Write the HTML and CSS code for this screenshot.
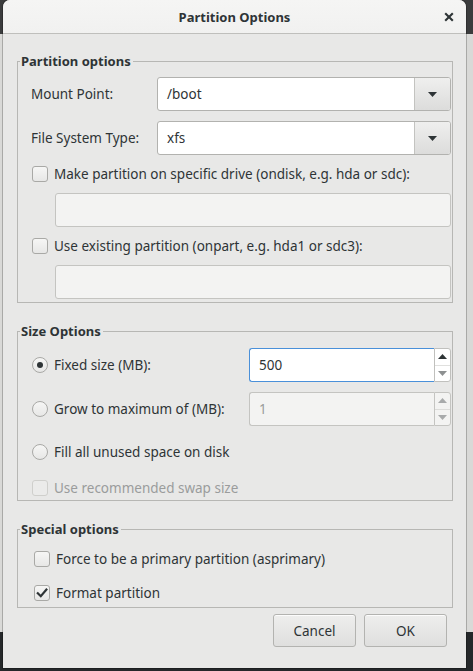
FILE: index.html
```html
<!DOCTYPE html>
<html>
<head>
<meta charset="utf-8">
<title>Partition Options</title>
<link rel="stylesheet" href="styles.css">
</head>
<body>
<div class="desktop">
  <div class="dialog">
    <header class="titlebar">
      <span class="title">Partition Options</span>
      <span class="close">
        <svg width="10" height="10" viewBox="0 0 10 10"><path d="M1.2 1.2 L8.8 8.8 M8.8 1.2 L1.2 8.8" stroke="#2e3436" stroke-width="2.1" stroke-linecap="butt" fill="none"/></svg>
      </span>
    </header>
    <div class="content">
      <fieldset class="frame frame-part">
        <legend>Partition options</legend>
        <div class="field-row">
          <span class="label">Mount Point:</span>
          <div class="combo">
            <span class="combo-text">/boot</span>
            <span class="combo-btn"><svg width="9" height="5" viewBox="0 0 9 5"><polygon points="0,0 9,0 4.5,5" fill="#2e3436"/></svg></span>
          </div>
        </div>
        <div class="field-row">
          <span class="label">File System Type:</span>
          <div class="combo">
            <span class="combo-text">xfs</span>
            <span class="combo-btn"><svg width="9" height="5" viewBox="0 0 9 5"><polygon points="0,0 9,0 4.5,5" fill="#2e3436"/></svg></span>
          </div>
        </div>
        <div class="check-row">
          <span class="check"></span>
          <span>Make partition on specific drive (ondisk, e.g. hda or sdc):</span>
        </div>
        <div class="entry disabled"></div>
        <div class="check-row">
          <span class="check"></span>
          <span>Use existing partition (onpart, e.g. hda1 or sdc3):</span>
        </div>
        <div class="entry disabled"></div>
      </fieldset>

      <fieldset class="frame frame-size">
        <legend>Size Options</legend>
        <div class="size-row">
          <div class="radio-line"><span class="radio on"></span><span>Fixed size (MB):</span></div>
          <div class="spin focused">
            <span class="spin-entry">500</span>
            <span class="spin-btns">
              <span class="spin-half"><svg width="9" height="5" viewBox="0 0 9 5"><polygon points="0,5 9,5 4.5,0" fill="#2e3436"/></svg></span>
              <span class="spin-half"><svg width="9" height="5" viewBox="0 0 9 5"><polygon points="0,0 9,0 4.5,5" fill="#8d9091"/></svg></span>
            </span>
          </div>
        </div>
        <div class="size-row second">
          <div class="radio-line"><span class="radio"></span><span>Grow to maximum of (MB):</span></div>
          <div class="spin disabled">
            <span class="spin-entry">1</span>
            <span class="spin-btns">
              <span class="spin-half"><svg width="9" height="5" viewBox="0 0 9 5"><polygon points="0,5 9,5 4.5,0" fill="#a8aaab"/></svg></span>
              <span class="spin-half"><svg width="9" height="5" viewBox="0 0 9 5"><polygon points="0,0 9,0 4.5,5" fill="#a8aaab"/></svg></span>
            </span>
          </div>
        </div>
        <div class="radio-line fill-row"><span class="radio"></span><span>Fill all unused space on disk</span></div>
        <div class="check-row swap-row muted">
          <span class="check dim"></span>
          <span>Use recommended swap size</span>
        </div>
      </fieldset>

      <fieldset class="frame frame-special">
        <legend>Special options</legend>
        <div class="check-row special">
          <span class="check"></span>
          <span>Force to be a primary partition (asprimary)</span>
        </div>
        <div class="check-row special">
          <span class="check checked"><svg width="12" height="12" viewBox="0 0 12 12"><path d="M1.8 6.2 L4.8 9.2 L10.4 2.6" stroke="#2e3436" stroke-width="2.2" fill="none" stroke-linecap="square"/></svg></span>
          <span>Format partition</span>
        </div>
      </fieldset>

      <div class="actions">
        <button class="btn">Cancel</button>
        <button class="btn">OK</button>
      </div>
    </div>
  </div>
</div>
</body>
</html>
```

FILE: styles.css
```css
* { box-sizing: border-box; }

html, body {
  margin: 0;
  padding: 0;
}

body {
  width: 473px;
  height: 671px;
  overflow: hidden;
  font-family: "Noto Sans", "Open Sans", sans-serif;
  font-size: 13.5px;
  color: #2e3436;
  background: linear-gradient(#3b3c3d 0, #3b3c3d 34px, #d9d9d7 34px, #d9d9d7 632px, #25282a 632px);
}

.desktop {
  padding-left: 3px;
}

.dialog {
  width: 463px;
  height: 668px;
  background: #e8e8e7;
  border-radius: 7px 7px 0 0;
  box-shadow: 0 0 0 1px rgba(0, 0, 0, 0.22);
  display: flex;
  flex-direction: column;
}

.titlebar {
  height: 34px;
  flex: none;
  border-bottom: 1px solid #bfbfbc;
  background: linear-gradient(#f5f5f4, #f1f1f0);
  border-radius: 7px 7px 0 0;
  display: flex;
  align-items: center;
  justify-content: center;
  position: relative;
}

.title {
  font-weight: bold;
  font-size: 13px;
  line-height: 16px;
}

.close {
  position: absolute;
  right: 12px;
  top: 12px;
  width: 10px;
  height: 10px;
  display: flex;
}

.content {
  padding: 19px 13px 0 14px;
  display: flex;
  flex-direction: column;
}

.frame {
  margin: 0;
  border: 1px solid #b7b7b4;
  border-radius: 0;
  padding: 8px 1px 3px 13px;
  display: flex;
  flex-direction: column;
  min-width: 0;
}

.frame legend {
  font-weight: bold;
  font-size: 13px;
  line-height: 16px;
  padding: 0 2px 0 1px;
  margin-left: -11px;
}

.frame-part .field-row + .field-row {
  margin-top: 10px;
}

.field-row {
  display: grid;
  grid-template-columns: 126px 1fr;
  align-items: center;
  height: 34px;
}

.combo {
  display: flex;
  height: 34px;
  border: 1px solid #b2b2af;
  border-radius: 3px;
  background: #ffffff;
  overflow: hidden;
}

.combo-text {
  flex: 1;
  padding-left: 9px;
  line-height: 32px;
}

.combo-btn {
  width: 36px;
  flex: none;
  border-left: 1px solid #c3c3c0;
  background: linear-gradient(#efefee, #dcdcdb);
  display: flex;
  align-items: center;
  justify-content: center;
  padding-top: 1px;
}

.check-row {
  display: flex;
  align-items: center;
  gap: 6px;
  height: 24px;
  padding-left: 1px;
  margin-top: 7px;
}

.frame-part .check-row + .entry {
  margin-top: 7px;
}

.entry {
  height: 34px;
  margin-left: 24px;
  border: 1px solid #c4c4c1;
  border-radius: 3px;
  background: #f3f3f2;
}

.check {
  width: 16px;
  height: 16px;
  flex: none;
  border: 1px solid #a9a9a6;
  border-radius: 3px;
  background: linear-gradient(#f6f6f5, #e7e7e6);
  display: flex;
  align-items: center;
  justify-content: center;
}

.check.dim {
  border-color: #cfcfcc;
  background: #ebebea;
}

.muted {
  color: #9a9c9c;
}

.radio {
  width: 16px;
  height: 16px;
  flex: none;
  border: 1px solid #a9a9a6;
  border-radius: 50%;
  background: linear-gradient(#f6f6f5, #e7e7e6);
  display: flex;
  align-items: center;
  justify-content: center;
}

.radio.on::after {
  content: "";
  width: 6px;
  height: 6px;
  border-radius: 50%;
  background: #2e3436;
}

.frame-size {
  margin-top: 20px;
  padding-top: 9px;
  padding-bottom: 2px;
}

.size-row {
  display: grid;
  grid-template-columns: 218px 1fr;
  align-items: center;
  height: 34px;
}

.size-row.second {
  margin-top: 10px;
}

.radio-line {
  display: flex;
  align-items: center;
  gap: 6px;
  padding-left: 1px;
}

.fill-row {
  height: 24px;
  margin-top: 14px;
}

.swap-row {
  height: 20px;
  margin-top: 14px;
}

.spin {
  display: flex;
  height: 34px;
}

.spin-entry {
  flex: 1;
  padding-left: 9px;
  line-height: 32px;
  border: 1px solid #4a90d9;
  border-right: none;
  border-radius: 3px 0 0 3px;
  background: #ffffff;
}

.spin-btns {
  width: 17px;
  flex: none;
  display: flex;
  flex-direction: column;
  border: 1px solid #c0c0bd;
  border-radius: 0 3px 3px 0;
  background: #ffffff;
}

.spin-half {
  flex: 1;
  display: flex;
  align-items: center;
  justify-content: center;
}

.spin-half + .spin-half {
  border-top: 1px solid #e0e0de;
}

.spin.disabled .spin-entry {
  border-color: #c4c4c1;
  border-right: none;
  background: #f3f3f2;
  color: #9a9c9c;
}

.spin.disabled .spin-btns {
  background: #f3f3f2;
  border-color: #c4c4c1;
}

.spin.disabled .spin-half + .spin-half {
  border-top-color: #dcdcda;
}

.frame-special {
  margin-top: 20px;
  padding-top: 10px;
  padding-bottom: 2px;
}

.check-row.special {
  padding-left: 3px;
  margin-top: 0;
}

.check-row.special + .check-row.special {
  margin-top: 10px;
}

.actions {
  display: flex;
  justify-content: flex-end;
  gap: 8px;
  margin-top: 6px;
  padding-right: 6px;
}

.btn {
  width: 83px;
  height: 33px;
  font-family: "Noto Sans", "Open Sans", sans-serif;
  font-size: 13.5px;
  color: #2e3436;
  border: 1px solid #b3b3b0;
  border-radius: 3px;
  background: linear-gradient(#eeeeed, #dfdfde);
  box-shadow: inset 0 1px rgba(255, 255, 255, 0.8);
  padding: 0;
}
```
